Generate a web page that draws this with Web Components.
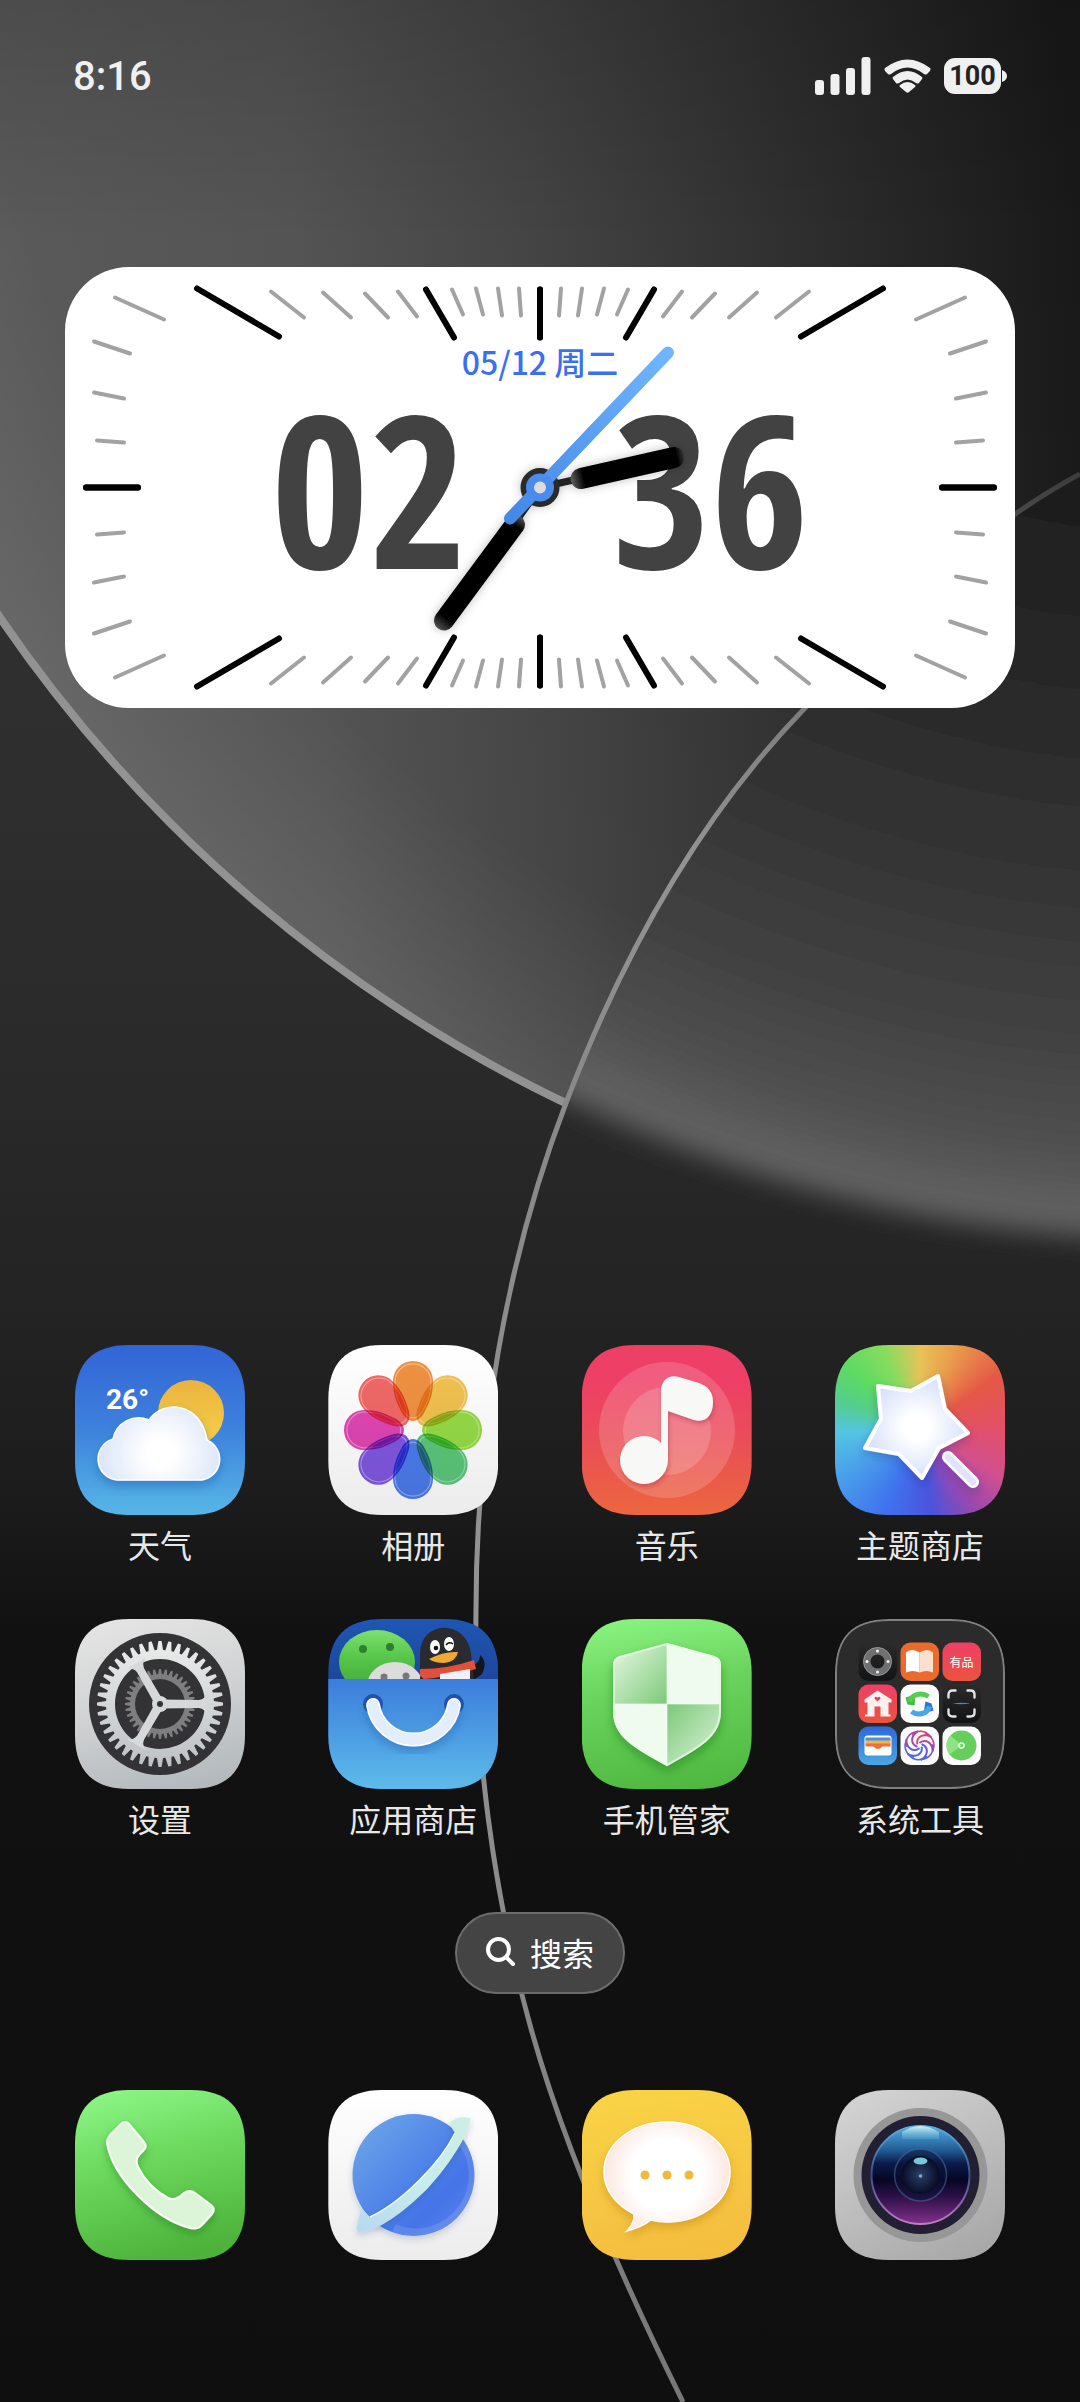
<!DOCTYPE html>
<html lang="zh-CN">
<head>
<meta charset="utf-8">
<meta name="viewport" content="width=device-width, initial-scale=1">
<title>桌面</title>
<style>
html, body
{
    margin: 0;
    min-height: 100%;
    background: #0f0f0f;
}
body
{
    font-family: "Noto Sans CJK SC", "Noto Sans", sans-serif;
    color: #e8e8e8;
}
</style>
</head>
<body>
<home-screen>
    <status-bar slot="status" time="8:16" battery="100"></status-bar>

    <clock-widget slot="widget" date="05/12 周二" hours="02" minutes="36"></clock-widget>

    <app-icon slot="apps" icon="weather" label="天气"></app-icon>
    <app-icon slot="apps" icon="photos" label="相册"></app-icon>
    <app-icon slot="apps" icon="music" label="音乐"></app-icon>
    <app-icon slot="apps" icon="themes" label="主题商店"></app-icon>
    <app-icon slot="apps" icon="settings" label="设置"></app-icon>
    <app-icon slot="apps" icon="store" label="应用商店"></app-icon>
    <app-icon slot="apps" icon="security" label="手机管家"></app-icon>
    <app-icon slot="apps" icon="folder" label="系统工具"></app-icon>

    <search-pill slot="search">搜索</search-pill>

    <app-icon slot="dock" icon="phone" title="电话"></app-icon>
    <app-icon slot="dock" icon="browser" title="浏览器"></app-icon>
    <app-icon slot="dock" icon="messages" title="短信"></app-icon>
    <app-icon slot="dock" icon="camera" title="相机"></app-icon>
</home-screen>

<script>
/* HELPERS */

// closed outline of a gear around 85,85
function gear(teeth, outer, root)
{
    const points = []
    const step = Math.PI * 2 / teeth

    for(let i = 0; i < teeth; i++)
    {
        const a = i * step

        for(const [offset, r] of [[-0.36, root], [-0.16, outer], [0.16, outer], [0.36, root]])
        {
            const t = a + offset * step
            points.push((85 + Math.cos(t) * r).toFixed(2) + ' ' + (85 + Math.sin(t) * r).toFixed(2))
        }
    }

    return 'M' + points.join('L') + 'Z'
}

function ring(r)
{
    return `M${85 - r} 85a${r} ${r} 0 1 0 ${r * 2} 0a${r} ${r} 0 1 0 ${-r * 2} 0Z`
}

function petals()
{
    const colors = ['#ee8228', '#efb938', '#86d62c', '#46bf68', '#326ae8', '#7040dc', '#dc2ca8', '#ee5452']
    const shape = 'M-20 -49a20 20 0 0 1 40 0C20 -34 16 -27 11 -17Q6 -9 0 -9Q-6 -9 -11 -17C-16 -27 -20 -34 -20 -49Z'

    return colors.map((color, i) => `
        <g transform="translate(85 85) rotate(${i * 45})" style="mix-blend-mode: multiply">
            <path d="${shape}" fill="${color}" opacity=".88"/>
            <path d="${shape}" fill="none" stroke="#fff" stroke-opacity=".4" stroke-width="1.2" transform="translate(0 -4) scale(.9)"/>
        </g>`).join('')
}

function swirl()
{
    const colors = ['#d8486c', '#b04a9c', '#6c58d8', '#4a68e8', '#5a62dc', '#a24cb0']

    return colors.map((color, i) =>
        `<path d="M19 16C24 11 31 14 33 22" fill="none" stroke="${color}" stroke-width="2" stroke-linecap="round" transform="rotate(${i * 60 - 50} 19 19)"/>
         <path d="M12 8C17 3 25 4 29 9" fill="none" stroke="${color}" stroke-width="1.6" stroke-linecap="round" transform="rotate(${i * 60} 19 19)"/>`).join('')
}

/* ICONS: background of the tile and its drawing on a 170 x 170 grid */

const icons =
{
    weather:
    {
        background: 'linear-gradient(#3264d6, #3d82dd 50%, #57b6e6)',
        art: `
        <defs>
            <linearGradient id="sun" x1="0" y1="0" x2="0" y2="1"><stop offset="0" stop-color="#e9b23e"/><stop offset="1" stop-color="#f8d24a"/></linearGradient>
            <radialGradient id="cloud" gradientUnits="userSpaceOnUse" cx="86" cy="108" r="66"><stop offset=".2" stop-color="#fff"/><stop offset="1" stop-color="#d9e4f8"/></radialGradient>
            <filter id="soft" x="-20%" y="-20%" width="140%" height="150%"><feDropShadow dx="0" dy="5" stdDeviation="5" flood-color="#1c5ca8" flood-opacity=".45"/></filter>
        </defs>
        <circle cx="116" cy="68" r="33" fill="url(#sun)"/>
        <g filter="url(#soft)">
            <path d="M42 135A21 21 0 0 1 38 94A26 26 0 0 1 74 75C88 54 126 57 132 95A21 21 0 0 1 127 135Z" fill="url(#cloud)" stroke="#fff" stroke-width="1.5"/>
        </g>
        <text x="31" y="64" font-family="Roboto, sans-serif" font-size="28" font-weight="700" fill="#fff">26°</text>`
    },
    photos:
    {
        background: 'linear-gradient(#fff, #ececec)',
        art: petals()
    },
    music:
    {
        background: 'linear-gradient(#ee3f66 20%, #ea4d58 55%, #ec663e)',
        art: `
        <defs><filter id="soft" x="-20%" y="-20%" width="150%" height="150%"><feDropShadow dx="1" dy="3" stdDeviation="2" flood-color="#a02838" flood-opacity=".4"/></filter></defs>
        <circle cx="85" cy="85" r="68" fill="#fff" opacity=".16"/>
        <circle cx="85" cy="86" r="44" fill="#fff" opacity=".17"/>
        <path d="M79 99V46C79 34 88 29 97 32L117 38Q131 43 131 57C131 71 123 78 112 75L86 66V115A24 24 0 1 1 79 98Z" fill="#f8f8f6" filter="url(#soft)"/>`
    },
    themes:
    {
        background: 'conic-gradient(#e8c258, #e9a04c 22deg, #e55846 55deg, #e2506a 90deg, #d2508e 120deg, #9a48b0 145deg, #4a54dc 172deg, #3f74ee 205deg, #4aa0ea 240deg, #55c4e4 268deg, #54ce8c 290deg, #5edb60 312deg, #86dc60 335deg, #e8c258)',
        art: `
        <defs>
            <radialGradient id="star" gradientUnits="userSpaceOnUse" cx="82" cy="82" r="52"><stop offset=".25" stop-color="#fff"/><stop offset="1" stop-color="#d5e0fa"/></radialGradient>
            <filter id="soft" x="-20%" y="-20%" width="140%" height="150%"><feDropShadow dx="0" dy="4" stdDeviation="4" flood-color="#203080" flood-opacity=".3"/></filter>
        </defs>
        <g filter="url(#soft)" stroke="#fff" stroke-linecap="round" stroke-linejoin="round">
            <path d="M43 41L76 46L103 31L110 64L133 88L104 103L87 133L64 109L30 103L46 74Z" fill="url(#star)" stroke-width="4"/>
            <path d="M113 112L138 137" stroke-width="12"/>
            <path d="M113 112L138 137" stroke="#dfe4fa" stroke-width="7"/>
        </g>`
    },
    settings:
    {
        background: 'linear-gradient(165deg, #e6e6e6, #d2d3d4 45%, #aeb5b9)',
        art: `
        <defs><linearGradient id="steel" gradientUnits="userSpaceOnUse" x1="0" y1="22" x2="0" y2="148"><stop offset="0" stop-color="#ececec"/><stop offset="1" stop-color="#bcc1c4"/></linearGradient></defs>
        <circle cx="85" cy="85" r="71" fill="#333336"/>
        <path d="${gear(36, 35, 30)}${ring(25)}" fill="#7e7e80" fill-rule="evenodd"/>
        <path d="${gear(40, 63, 54)}${ring(45)}" fill="url(#steel)" fill-rule="evenodd"/>
        <g fill="#d6d8da">
            <path d="M85 80.500L124 81Q130 80 132 74V96Q130 90 124 89L85 89.500Z"/>
            <path d="M85 80.500L124 81Q130 80 132 74V96Q130 90 124 89L85 89.500Z" transform="rotate(120 85 85)"/>
            <path d="M85 80.500L124 81Q130 80 132 74V96Q130 90 124 89L85 89.500Z" transform="rotate(240 85 85)"/>
            <circle cx="85" cy="85" r="8"/>
        </g>
        <circle cx="85" cy="85" r="3" fill="#333"/>`
    },
    store:
    {
        background: 'linear-gradient(#1f56b4, #1d479c 35%)',
        art: `
        <defs>
            <linearGradient id="bag" x1="0" y1="0" x2="0" y2="1"><stop offset="0" stop-color="#3c7ddc"/><stop offset="1" stop-color="#5dbbe9"/></linearGradient>
            <linearGradient id="bubble" x1="0" y1="0" x2="0" y2="1"><stop offset="0" stop-color="#7ee070"/><stop offset=".4" stop-color="#58c84c"/><stop offset="1" stop-color="#3da436"/></linearGradient>
            <filter id="soft" x="-20%" y="-20%" width="140%" height="160%"><feDropShadow dx="0" dy="6" stdDeviation="4" flood-color="#1c5ca8" flood-opacity=".4"/></filter>
        </defs>
        <ellipse cx="49" cy="43" rx="38" ry="32" fill="url(#bubble)"/>
        <circle cx="35" cy="30" r="4" fill="#2f7f30"/>
        <circle cx="62" cy="28" r="4" fill="#2f7f30"/>
        <ellipse cx="67" cy="67" rx="28" ry="24" fill="#dcdcdc"/>
        <circle cx="56" cy="58" r="3.500" fill="#777"/>
        <circle cx="78" cy="57" r="3.500" fill="#777"/>
        <path d="M143 47Q152 45 152 36Q160 43 154 55L144 62Z" fill="#15161c"/>
        <path d="M92 62V36C92 0 138 0 143 34L146 62Z" fill="#2a2b31"/>
        <path d="M92 50Q120 50 146 41L148 50Q120 58 96 60L92 57Z" fill="#e2503c"/>
        <path d="M112 55L142 50V62H112Z" fill="#f2f2f2"/>
        <ellipse cx="107" cy="28" rx="5" ry="7" fill="#fff"/>
        <ellipse cx="121" cy="25" rx="5" ry="7" fill="#fff"/>
        <circle cx="108" cy="29" r="2.300" fill="#111"/>
        <path d="M118 26Q121 22 125 25" fill="none" stroke="#111" stroke-width="1.500"/>
        <path d="M101 40Q116 32 130 33Q128 43 116 44Q106 44 101 40Z" fill="#f0a92c"/>
        <rect y="60" width="170" height="110" fill="url(#bag)"/>
        <circle cx="45" cy="85" r="10" fill="#1e52ae"/>
        <circle cx="126" cy="85" r="10" fill="#1e52ae"/>
        <g fill="none" stroke-linecap="round" filter="url(#soft)">
            <path d="M45 86A41 41 0 0 0 126 86" stroke="#fff" stroke-width="14"/>
            <path d="M45 86A41 41 0 0 0 126 86" stroke="#e4edfa" stroke-width="11"/>
        </g>`
    },
    security:
    {
        background: 'linear-gradient(170deg, #8bf682, #6bd45e 40%, #4bb53c)',
        art: `
        <defs>
            <clipPath id="shield"><path d="M85 24L132 37Q139 39 139 46V92C139 118 118 129 85 147C52 129 31 118 31 92V46Q31 39 38 37Z"/></clipPath>
            <linearGradient id="tl" x1="0" y1="0" x2="1" y2="1"><stop offset=".2" stop-color="#d3f0d0"/><stop offset="1" stop-color="#7cca78"/></linearGradient>
            <linearGradient id="br" x1="0" y1="0" x2="1" y2="1"><stop offset="0" stop-color="#7cc87a"/><stop offset=".8" stop-color="#ccecc8"/></linearGradient>
            <filter id="soft" x="-20%" y="-20%" width="140%" height="150%"><feDropShadow dx="0" dy="5" stdDeviation="5" flood-color="#1c7018" flood-opacity=".45"/></filter>
        </defs>
        <g filter="url(#soft)">
            <g clip-path="url(#shield)">
                <rect x="31" y="24" width="54" height="61" fill="url(#tl)"/>
                <rect x="85" y="24" width="54" height="61" fill="#f0fbef"/>
                <rect x="31" y="85" width="54" height="62" fill="#f0fbef"/>
                <rect x="85" y="85" width="54" height="62" fill="url(#br)"/>
                <path d="M85 24V147M31 85H139" stroke="#fff" stroke-opacity=".6"/>
            </g>
            <path d="M85 25L132 38Q138 40 138 46V92C138 117 118 128 85 146C52 128 32 117 32 92V46Q32 40 38 38Z" fill="none" stroke="#e8fae6" stroke-width="2" stroke-opacity=".8"/>
        </g>`
    },
    folder:
    {
        background: '#2b2b2b',
        art: `
        <defs>
            <linearGradient id="red" x1="0" y1="0" x2="0" y2="1"><stop offset="0" stop-color="#ee3f66"/><stop offset="1" stop-color="#ea543e"/></linearGradient>
            <linearGradient id="blue" x1="0" y1="0" x2="0" y2="1"><stop offset="0" stop-color="#2f68d8"/><stop offset="1" stop-color="#4aa8e4"/></linearGradient>
            <linearGradient id="dark" x1="0" y1="0" x2="0" y2="1"><stop offset="0" stop-color="#2b2b2b"/><stop offset="1" stop-color="#121315"/></linearGradient>
        </defs>
        <path d="M1 54C1 18 18 1 54 1H116C152 1 169 18 169 54V116C169 152 152 169 116 169H54C18 169 1 152 1 116Z" fill="none" stroke="#808080" stroke-width="2"/>
        <g transform="translate(23.500 23.500)">
            <rect width="38.500" height="38.500" rx="10" fill="url(#dark)"/>
            <circle cx="19" cy="19" r="10.500" fill="none" stroke="#707070" stroke-width="7"/>
            <circle cx="19" cy="19" r="14" fill="none" stroke="#999" stroke-width="1"/>
            <g fill="#f4f4f4"><circle cx="19" cy="8.500" r="1.500"/><circle cx="19" cy="29.500" r="1.500"/><circle cx="8.500" cy="19" r="1.500"/><circle cx="29.500" cy="19" r="1.500"/></g>
        </g>
        <g transform="translate(65.500 23.500)">
            <rect width="38.500" height="38.500" rx="10" fill="#ec6b2c"/>
            <path d="M19 10Q11 5 5.500 10V30Q12 27 19 30Z" fill="#fff"/>
            <path d="M19 10Q27 5 32.500 10V30Q26 27 19 30Z" fill="#fbe0d0"/>
        </g>
        <g transform="translate(107.500 23.500)">
            <rect width="38.500" height="38.500" rx="10" fill="url(#red)"/>
            <text x="19" y="24" text-anchor="middle" font-size="12" fill="#fff">有品</text>
        </g>
        <g transform="translate(23.500 65.500)">
            <rect width="38.500" height="38.500" rx="10" fill="url(#red)"/>
            <path d="M19 6L33 15V18H30V30H32V32H22V22H16V32H6.500V30H9V18H6V15Z" fill="#fdf0f0"/>
            <path d="M19 17L16 14Q16 11 19 13Q22 11 22 14Z" fill="#e8405c"/>
        </g>
        <g transform="translate(65.500 65.500)">
            <rect width="38.500" height="38.500" rx="10" fill="#fbfbfb"/>
            <path d="M5 13L15 10L14 21L7 20Z" fill="#42b846"/>
            <path d="M9 17C12 10 20 7 28 12" fill="none" stroke="#58cc50" stroke-width="5"/>
            <path d="M33 26L23 29L25 17L31 19Z" fill="#2f74d4"/>
            <path d="M29 22C27 29 18 32 11 27" fill="none" stroke="#46a6e8" stroke-width="5"/>
        </g>
        <g transform="translate(107.500 65.500)">
            <rect width="38.500" height="38.500" rx="10" fill="url(#dark)"/>
            <path d="M6 13V10Q6 6 10 6H13M25 6H28Q32 6 32 10V13M32 25V28Q32 32 28 32H25M13 32H10Q6 32 6 28V25" fill="none" stroke="#e4e4e4" stroke-width="2.400" stroke-linecap="round"/>
            <path d="M10 19Q19 17.500 28 19Q19 20.500 10 19Z" fill="#4c82e8"/>
        </g>
        <g transform="translate(23.500 107.500)">
            <rect width="38.500" height="38.500" rx="10" fill="url(#blue)"/>
            <rect x="6" y="9" width="27" height="20" rx="3" fill="#fff"/>
            <rect x="7" y="11" width="25" height="4" fill="#4a90e4"/>
            <rect x="7" y="14" width="25" height="4" fill="#f0b848"/>
            <path d="M7 17H32V20H24Q19 25 15 20H7Z" fill="#ec7038"/>
        </g>
        <g transform="translate(65.500 107.500)">
            <rect width="38.500" height="38.500" rx="10" fill="#fbfbfb"/>
            ${swirl()}
        </g>
        <g transform="translate(107.500 107.500)">
            <rect width="38.500" height="38.500" rx="10" fill="#fbfbfb"/>
            <circle cx="19" cy="19" r="15" fill="#66cf5c"/>
            <path d="M19 19L8 9A15 15 0 0 0 7 28Z" fill="#8ce482"/>
            <circle cx="19" cy="19" r="2.500" fill="none" stroke="#fff" stroke-width="1.500"/>
        </g>`
    },
    phone:
    {
        background: 'linear-gradient(165deg, #8ff98a, #6dd95e 40%, #4db23a 90%)',
        art: `
        <defs><filter id="soft" x="-20%" y="-20%" width="140%" height="150%"><feDropShadow dx="0" dy="4" stdDeviation="4" flood-color="#1c7018" flood-opacity=".4"/></filter></defs>
        <path d="M46 34Q50 30 54 34L69 52Q73 57 68 61C62 66 60 70 63 77C70 91 82 102 93 108C99 111 104 108 109 103Q115 99 120 103L136 115Q141 119 137 124L127 135Q123 140 115 138C80 129 38 88 32 53Q32 48 36 44Z" fill="#dcf5d8" stroke="#f8fff6" stroke-width="2" filter="url(#soft)"/>`
    },
    browser:
    {
        background: 'linear-gradient(#fff, #ececec)',
        art: `
        <defs>
            <linearGradient id="globe" x1="0" y1="0" x2="1" y2="1"><stop offset=".1" stop-color="#69a2e8"/><stop offset=".7" stop-color="#4474e8"/><stop offset="1" stop-color="#5c84ec"/></linearGradient>
            <linearGradient id="orbit" x1="0" y1="1" x2="1" y2="0"><stop offset="0" stop-color="#b8d8f0"/><stop offset=".5" stop-color="#c8ecec"/><stop offset="1" stop-color="#cdeee2"/></linearGradient>
            <filter id="soft" x="-20%" y="-20%" width="140%" height="150%"><feDropShadow dx="0" dy="3" stdDeviation="3" flood-color="#204080" flood-opacity=".22"/></filter>
        </defs>
        <circle cx="85.500" cy="85" r="61" fill="url(#globe)" filter="url(#soft)"/>
        <path d="M130 47A57 57 0 0 1 66 138" fill="none" stroke="#fff" stroke-opacity=".12" stroke-width="8"/>
        <path d="M42 127C74 112 113 72 127 43L121 33Q131 25 142 28C143 40 124 72 100 98C76 122 50 142 30 142Q27 137 34 119Z" fill="url(#orbit)" filter="url(#soft)"/>
        <path d="M42 127C74 112 113 72 127 43" fill="none" stroke="#eefcfc" stroke-width="1.500"/>`
    },
    messages:
    {
        background: 'linear-gradient(170deg, #f9d445, #f4bc3f)',
        art: `
        <defs>
            <radialGradient id="balloon" gradientUnits="userSpaceOnUse" cx="85" cy="85" r="66"><stop offset=".55" stop-color="#fff"/><stop offset="1" stop-color="#fbe4dc"/></radialGradient>
            <filter id="soft" x="-20%" y="-20%" width="140%" height="150%"><feDropShadow dx="0" dy="5" stdDeviation="5" flood-color="#b87810" flood-opacity=".4"/></filter>
        </defs>
        <path d="M85 32C120 32 148 54 148 82C148 110 120 132 85 132Q77 132 69 130Q60 137 45 141Q53 133 52 124C34 115 22 100 22 82C22 54 50 32 85 32Z" fill="url(#balloon)" stroke="#fff" stroke-width="1.500" filter="url(#soft)"/>
        <g fill="#f0b93c"><circle cx="63" cy="85" r="4.500"/><circle cx="85" cy="85" r="4.500"/><circle cx="107" cy="85" r="4.500"/></g>`
    },
    camera:
    {
        background: 'linear-gradient(150deg, #d6d6d6, #bdbdbd 50%, #a4a4a4)',
        art: `
        <defs>
            <linearGradient id="lens" x1="0" y1="0" x2="0" y2="1"><stop offset=".05" stop-color="#4a9cd4"/><stop offset=".25" stop-color="#215a94"/><stop offset=".38" stop-color="#0b1c48"/><stop offset=".55" stop-color="#060624"/><stop offset=".72" stop-color="#2c1048"/><stop offset="1" stop-color="#84308c"/></linearGradient>
            <linearGradient id="rim" x1="0" y1="0" x2="0" y2="1"><stop offset="0" stop-color="#58b4e0"/><stop offset=".5" stop-color="#384c88"/><stop offset="1" stop-color="#c080c0"/></linearGradient>
            <linearGradient id="shine" x1="0" y1="0" x2="0" y2="1"><stop offset="0" stop-color="#d4f4f8"/><stop offset="1" stop-color="#4ca4cc" stop-opacity=".5"/></linearGradient>
            <radialGradient id="pupil"><stop offset="0" stop-color="#2a4068"/><stop offset="1" stop-color="#080c24"/></radialGradient>
        </defs>
        <circle cx="85.500" cy="85" r="67" fill="#979797"/>
        <circle cx="85.500" cy="85" r="59" fill="#231f33"/>
        <circle cx="85.500" cy="85" r="49" fill="url(#lens)" stroke="url(#rim)" stroke-width="2"/>
        <path d="M67 49V42Q85 30 104 42V49Z" fill="url(#shine)"/>
        <circle cx="85.500" cy="85" r="26" fill="#0a1234" fill-opacity=".5" stroke="#4c6494" stroke-opacity=".6" stroke-width="1.500"/>
        <circle cx="85.500" cy="85" r="19" fill="url(#pupil)"/>
        <ellipse cx="85.500" cy="71" rx="7" ry="3.500" fill="#78c8dc"/>
        <circle cx="85.500" cy="86" r="1.800" fill="#8ca4c8"/>`
    }
}

/* HOME SCREEN */

const homeTemplate = document.createElement('template')

homeTemplate.innerHTML =
`
<style>
:host
{
    position: relative;
    display: flex;
    flex-direction: column;
    min-height: 100vh;
    box-sizing: border-box;
    padding: 0 65px 142px;
    isolation: isolate;
    overflow: hidden;
}
#wallpaper
{
    position: absolute;
    inset: 0;
    z-index: -1;
    width: 100%;
    height: 100%;
}
main
{
    display: flex;
    flex: 1;
    flex-direction: column;
    margin-top: 115px;
}
#apps, #dock
{
    display: grid;
    grid-template-columns: repeat(4, 170px);
    justify-content: space-between;
    padding: 0 10px;
}
#apps
{
    row-gap: 55px;
    margin-top: auto;
}
#search
{
    display: flex;
    justify-content: center;
    margin: 74px 0 96px;
}
</style>
<svg id="wallpaper" viewBox="0 0 1080 2402" preserveAspectRatio="xMidYMid slice" aria-hidden="true">
    <defs>
        <linearGradient id="base" x1="0" y1="0" x2="0" y2="1">
            <stop offset=".25" stop-color="#303030"/><stop offset=".42" stop-color="#2b2b2b"/><stop offset=".55" stop-color="#232323"/>
            <stop offset=".62" stop-color="#1c1c1c"/><stop offset=".68" stop-color="#111"/><stop offset="1" stop-color="#0f0f0f"/>
        </linearGradient>
        <linearGradient id="left" gradientUnits="userSpaceOnUse" x1="0" y1="400" x2="1080" y2="330">
            <stop offset="0" stop-color="#5a5a5a"/><stop offset=".28" stop-color="#545454"/><stop offset=".5" stop-color="#444"/>
            <stop offset=".75" stop-color="#2e2e2e"/><stop offset="1" stop-color="#191919"/>
        </linearGradient>
        <linearGradient id="top" x1="0" y1="0" x2="0" y2="1"><stop offset="0" stop-opacity=".15"/><stop offset=".2" stop-opacity="0"/></linearGradient>
        <radialGradient id="glow" gradientUnits="userSpaceOnUse" cx="1186" cy="-192" r="1436">
            <stop offset=".86" stop-color="#fff" stop-opacity="0"/><stop offset="1" stop-color="#fff" stop-opacity=".08"/>
        </radialGradient>
        <radialGradient id="right" gradientUnits="userSpaceOnUse" cx="1186" cy="-192" r="1436">
            <stop offset=".5" stop-color="#1f1f1f"/><stop offset=".65" stop-color="#2b2b2b"/><stop offset=".75" stop-color="#343434"/>
            <stop offset=".87" stop-color="#434343"/><stop offset=".94" stop-color="#515151"/><stop offset=".98" stop-color="#606060"/><stop offset="1" stop-color="#606060"/>
        </radialGradient>
        <linearGradient id="line" x1="0" y1="0" x2="0" y2="1">
            <stop offset="0" stop-color="#3c3c3c"/><stop offset=".1" stop-color="#777"/><stop offset=".2" stop-color="#939393"/><stop offset=".34" stop-color="#888"/>
            <stop offset=".6" stop-color="#949494"/><stop offset="1" stop-color="#777"/>
        </linearGradient>
        <clipPath id="leftSide"><path d="M0 0H1080V474C985 525 890 612 805 708C698 818 621 959 566 1103L540 1240H0Z"/></clipPath>
        <clipPath id="rightSide"><path d="M1080 474C985 525 890 612 805 708C698 818 621 959 566 1103C505 1262 476 1440 476 1610H1080Z"/></clipPath>
        <filter id="blur" filterUnits="userSpaceOnUse" x="-400" y="-400" width="3200" height="1900"><feGaussianBlur stdDeviation="13"/></filter>
    </defs>
    <rect width="1080" height="2402" fill="url(#base)"/>
    <g clip-path="url(#leftSide)">
        <circle cx="1186" cy="-192" r="1436" fill="url(#left)"/>
        <circle cx="1186" cy="-192" r="1436" fill="url(#glow)"/>
        <circle cx="1186" cy="-192" r="1436" fill="none" stroke="#929292" stroke-width="8"/>
        <rect width="1080" height="1200" fill="url(#top)"/>
    </g>
    <g clip-path="url(#rightSide)">
        <circle cx="1186" cy="-192" r="1432" fill="url(#right)" filter="url(#blur)"/>
    </g>
    <path d="M1080 474C985 525 890 612 805 708C698 818 621 959 566 1103C505 1262 476 1440 476 1610C474 1748 493 1892 530 2025C563 2145 625 2285 683 2402" fill="none" stroke="url(#line)" stroke-width="5"/>
</svg>
<slot name="status"></slot>
<main>
    <slot name="widget"></slot>
    <div id="apps"><slot name="apps"></slot></div>
    <div id="search"><slot name="search"></slot></div>
    <nav id="dock"><slot name="dock"></slot></nav>
</main>
`

class HomeScreen extends HTMLElement
{
    constructor()
    {
        super()

        this.attachShadow({mode: "open"})

        this.shadowRoot.appendChild(homeTemplate.content.cloneNode(true))
    }
}

/* STATUS BAR */

const statusTemplate = document.createElement('template')

statusTemplate.innerHTML =
`
<style>
:host
{
    display: flex;
    align-items: center;
    justify-content: space-between;
    height: 152px;
    padding: 0 8px;
    font-family: Roboto, sans-serif;
    color: #f0f0f0;
}
#time
{
    font-size: 40px;
    font-weight: 500;
}
#icons
{
    display: flex;
    align-items: center;
    gap: 13px;
}
svg
{
    display: block;
    fill: #f0f0f0;
}
#battery
{
    display: flex;
    align-items: center;
    gap: 1px;
}
#level
{
    width: 57px;
    border-radius: 11px;
    background: #f0f0f0;
    color: #222;
    font-size: 27px;
    font-weight: 700;
    line-height: 36px;
    text-align: center;
}
</style>
<span id="time"></span>
<div id="icons">
    <svg width="56" height="38" viewBox="0 0 56 38" aria-hidden="true">
        <rect y="23" width="9" height="15" rx="3"/><rect x="15.500" y="17" width="9" height="21" rx="3"/>
        <rect x="31" y="11" width="9" height="27" rx="3"/><rect x="46.500" width="9" height="38" rx="3"/>
    </svg>
    <svg width="47" height="34" viewBox="0 0 47 34" aria-hidden="true">
        <path d="M1 9Q23.500 -8 46 9Q47 10 46 12L43 15Q42 16 40 15Q23.500 2 7 15Q5 16 4 15L1 12Q0 10 1 9Z"/>
        <path d="M9 18Q23.500 6 38 18Q39 19 38 20L35 24Q34 25 32 24Q23.500 17 15 24Q13 25 12 24L9 20Q8 19 9 18Z"/>
        <path d="M16 26Q23.500 20 31 26Q32 27 31 28L25 33Q23.500 34.500 22 33L16 28Q15 27 16 26Z"/>
    </svg>
    <div id="battery">
        <span id="level"></span>
        <svg width="5" height="12" viewBox="0 0 5 12" aria-hidden="true"><path d="M0 0Q5 2 5 6T0 12Z"/></svg>
    </div>
</div>
`

class StatusBar extends HTMLElement
{
    constructor()
    {
        super()

        this.attachShadow({mode: "open"})

        this.shadowRoot.appendChild(statusTemplate.content.cloneNode(true))
    }

    connectedCallback()
    {
        this.shadowRoot.querySelector('#time').textContent = this.getAttribute('time')
        this.shadowRoot.querySelector('#level').textContent = this.getAttribute('battery')
    }
}

/* CLOCK WIDGET */

// one quarter of the dial, from the centre: x1, y1, x2, y2, bold
const ticks =
[
    [0, 198, 0, 150, true],
    [21, 199, 19, 172],
    [42, 199, 38, 172],
    [64, 199, 57, 173],
    [88, 198, 77, 173],
    [114, 198, 86, 150, true],
    [142, 196, 123, 171],
    [175, 194, 152, 170],
    [217, 195, 189, 170],
    [269, 196, 236, 170],
    [343, 199, 261, 151, true],
    [425, 190, 376, 168],
    [446, 146, 410, 134],
    [446, 95, 416, 89],
    [443, 47, 416, 45],
    [454, 0, 402, 0, true]
]

function dial()
{
    const lines = []

    for(const [x1, y1, x2, y2, bold] of ticks)
    {
        for(const [sx, sy] of [[1, 1], [1, -1], [-1, 1], [-1, -1]])
        {
            lines.push(`<line x1="${x1 * sx}" y1="${y1 * sy}" x2="${x2 * sx}" y2="${y2 * sy}"${bold ? ' class="bold"' : ''}/>`)
        }
    }

    return lines.join('')
}

const clockTemplate = document.createElement('template')

clockTemplate.innerHTML =
`
<style>
:host
{
    position: relative;
    display: flex;
    flex-direction: column;
    align-items: center;
    box-sizing: border-box;
    padding: 74px 0 116px;
    border-radius: 64px;
    background: #fff;
}
svg
{
    position: absolute;
    inset: 0;
    width: 100%;
    height: 100%;
}
line
{
    stroke: #a2a2a2;
    stroke-width: 4;
    stroke-linecap: round;
}
line.bold
{
    stroke: #000;
    stroke-width: 6;
}
#date
{
    color: #3a6ff2;
    font-size: 32px;
    font-weight: 500;
    line-height: 40px;
}
#digits
{
    display: flex;
    gap: 134px;
    color: #424242;
    font-family: "Noto Sans ExtraCondensed", "Open Sans Condensed", "Roboto Condensed", "Liberation Sans Narrow", sans-serif;
    font-size: 212px;
    font-weight: 800;
    line-height: 211px;
}
#digits span
{
    display: flex;
    justify-content: center;
    width: 208px;
}
</style>
<svg viewBox="-475 -220.500 950 441" aria-hidden="true">${dial()}</svg>
<div id="date"></div>
<div id="digits"><span id="hours"></span><span id="minutes"></span></div>
<svg viewBox="-475 -220.500 950 441" aria-hidden="true">
    <defs>
        <linearGradient id="second" x1="0" y1="1" x2="1" y2="0"><stop offset="0" stop-color="#4488e8"/><stop offset="1" stop-color="#70b6fc"/></linearGradient>
        <linearGradient id="hourEnd" gradientUnits="userSpaceOnUse" x1="30" y1="-7" x2="146" y2="-32"><stop offset="0" stop-color="#666"/><stop offset=".12" stop-color="#000"/><stop offset=".92" stop-color="#000"/><stop offset="1" stop-color="#444"/></linearGradient>
        <linearGradient id="minuteEnd" gradientUnits="userSpaceOnUse" x1="-20" y1="28" x2="-103" y2="141"><stop offset="0" stop-color="#555"/><stop offset=".08" stop-color="#000"/><stop offset=".9" stop-color="#000"/><stop offset="1" stop-color="#555"/></linearGradient>
        <filter id="shade" filterUnits="userSpaceOnUse" x="-200" y="-200" width="400" height="400"><feDropShadow dx="0" dy="0" stdDeviation="5" flood-opacity=".25"/></filter>
    </defs>
    <g fill="none" stroke-linecap="round" filter="url(#shade)">
        <path d="M0 0L40 -9M0 0L-24 34" stroke="#222" stroke-width="7"/>
        <path d="M41 -9L134 -30" stroke="url(#hourEnd)" stroke-width="21"/>
        <path d="M-25 37L-96 133" stroke="url(#minuteEnd)" stroke-width="20"/>
        <circle r="16" stroke="#2a2a2a" stroke-width="7"/>
    </g>
    <path d="M-30 31L128 -135" stroke="url(#second)" stroke-width="12" stroke-linecap="round"/>
    <circle r="10" fill="#dcdcdc" stroke="#4a8cec" stroke-width="8"/>
</svg>
`

class ClockWidget extends HTMLElement
{
    constructor()
    {
        super()

        this.attachShadow({mode: "open"})

        this.shadowRoot.appendChild(clockTemplate.content.cloneNode(true))
    }

    connectedCallback()
    {
        for(const name of ['date', 'hours', 'minutes'])
        {
            this.shadowRoot.querySelector('#' + name).textContent = this.getAttribute(name)
        }
    }
}

/* APP ICON */

const iconTemplate = document.createElement('template')

iconTemplate.innerHTML =
`
<style>
:host
{
    display: block;
}
button
{
    display: flex;
    flex-direction: column;
    align-items: center;
    gap: 9px;
    width: 100%;
    padding: 0;
    border: 0;
    background: none;
    color: inherit;
    font: inherit;
    font-size: 32px;
    line-height: 40px;
    white-space: nowrap;
    cursor: pointer;
}
#tile
{
    width: 170px;
    height: 170px;
    isolation: isolate;
    clip-path: path('M0 54C0 18 18 0 54 0H116C152 0 170 18 170 54V116C170 152 152 170 116 170H54C18 170 0 152 0 116Z');
}
svg
{
    display: block;
}
#label:empty
{
    display: none;
}
</style>
<button type="button">
    <span id="tile"></span>
    <span id="label"></span>
</button>
`

class AppIcon extends HTMLElement
{
    constructor()
    {
        super()

        this.attachShadow({mode: "open"})

        this.shadowRoot.appendChild(iconTemplate.content.cloneNode(true))
    }

    connectedCallback()
    {
        const icon = icons[this.getAttribute('icon')]
        const tile = this.shadowRoot.querySelector('#tile')

        tile.style.background = icon.background
        tile.innerHTML = `<svg width="170" height="170" viewBox="0 0 170 170" aria-hidden="true">${icon.art}</svg>`

        this.shadowRoot.querySelector('#label').textContent = this.getAttribute('label') || ''

        if(this.title)
        {
            this.shadowRoot.querySelector('button').setAttribute('aria-label', this.title)
        }
    }
}

/* SEARCH PILL */

const searchTemplate = document.createElement('template')

searchTemplate.innerHTML =
`
<style>
:host
{
    display: block;
}
button
{
    display: flex;
    align-items: center;
    gap: 14px;
    height: 82px;
    padding: 0 29px 2px;
    border: 2px solid #6c6c6c;
    border-radius: 41px;
    background: #444;
    color: #fff;
    font: inherit;
    font-size: 32px;
    line-height: 40px;
    cursor: pointer;
}
</style>
<button type="button">
    <svg width="30" height="30" viewBox="0 0 30 30" fill="none" stroke="#fff" stroke-width="4" stroke-linecap="round" aria-hidden="true">
        <circle cx="12.500" cy="12.500" r="10.500"/><path d="M20 20L27 27"/>
    </svg>
    <slot></slot>
</button>
`

class SearchPill extends HTMLElement
{
    constructor()
    {
        super()

        this.attachShadow({mode: "open"})

        this.shadowRoot.appendChild(searchTemplate.content.cloneNode(true))
    }
}

window.customElements.define('home-screen', HomeScreen)
window.customElements.define('status-bar', StatusBar)
window.customElements.define('clock-widget', ClockWidget)
window.customElements.define('app-icon', AppIcon)
window.customElements.define('search-pill', SearchPill)
</script>
</body>
</html>
